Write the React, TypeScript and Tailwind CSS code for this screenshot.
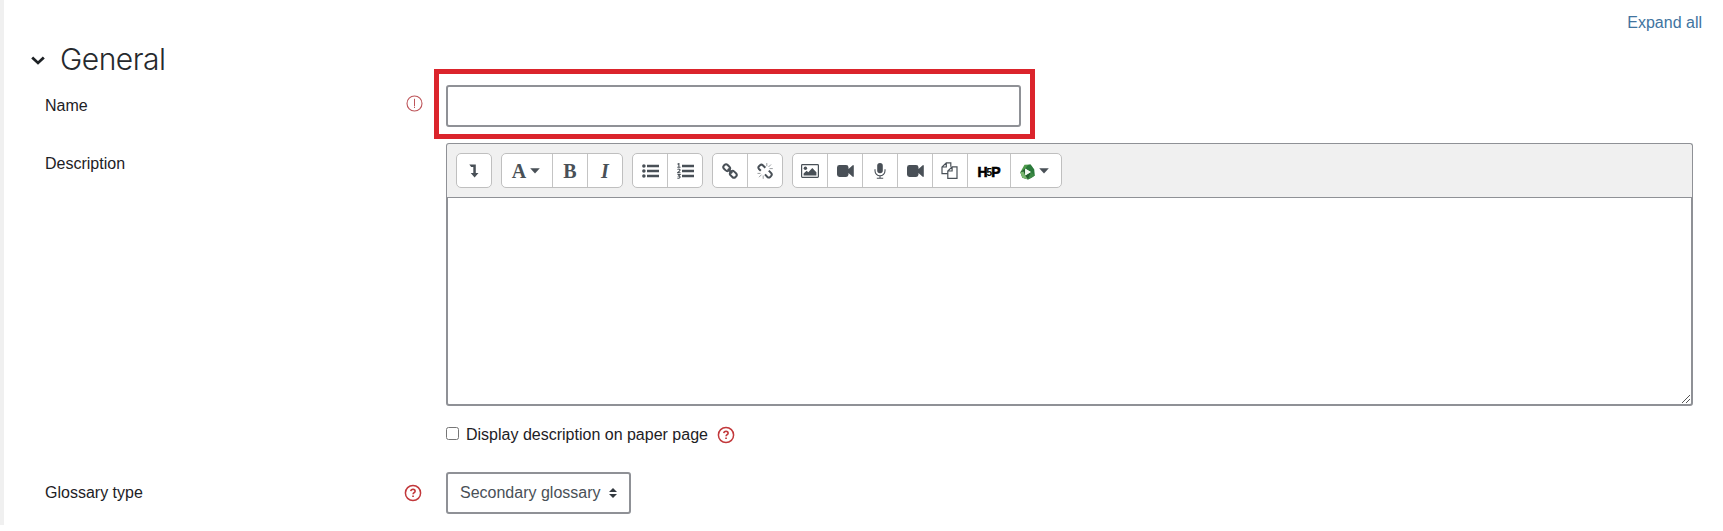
import type { ReactNode } from "react";

const ink = "#495057";

function ToolGroup({ children }: { children: ReactNode }) {
  return (
    <div className="flex h-[35px] divide-x divide-[#c4c4c4] overflow-hidden rounded-[5px] border border-[#bfbfbf] bg-white">
      {children}
    </div>
  );
}

function Tool({ label, wide = "w-[35px]", children }: { label: string; wide?: string; children: ReactNode }) {
  return (
    <button aria-label={label} className={`flex h-full shrink-0 items-center justify-center ${wide}`}>
      {children}
    </button>
  );
}

function Caret() {
  return (
    <svg width="10" height="6" viewBox="0 0 10 6" fill={ink}>
      <path d="M.2.200h9.600L5 5.600z" />
    </svg>
  );
}

function LevelDown() {
  return (
    <svg width="10" height="14" viewBox="0 0 10 14" fill={ink}>
      <path d="M.3.5H6.800V9h2.700L5.600 13.500 1.700 9h2.600V2.900H2.200z" />
    </svg>
  );
}

function BulletList() {
  return (
    <svg width="17" height="14" viewBox="0 0 17 14" fill={ink}>
      <circle cx="1.900" cy="2" r="1.800" />
      <circle cx="1.900" cy="7" r="1.800" />
      <circle cx="1.900" cy="12" r="1.800" />
      <path d="M5 .8h12v2.400H5zM5 5.800h12v2.400H5zM5 10.800h12v2.400H5z" />
    </svg>
  );
}

function NumberList() {
  return (
    <svg width="17" height="16" viewBox="0 0 17 16" fill={ink}>
      <path d="M5 1.800h12v2.400H5zM5 6.800h12v2.400H5zM5 11.800h12v2.400H5z" />
      <path
        d="M.5 1.300 1.900.6V4M.3 4.300h3.200M.5 6.500q1.400-.9 2.300 0T.6 9.700h2.900M.5 11.500h2.500L1.600 13q1.700 0 1.400 1.400-.9 1.300-2.600.5"
        fill="none"
        stroke={ink}
        strokeWidth="1.100"
      />
    </svg>
  );
}

function Chain() {
  return (
    <svg width="16" height="16" viewBox="0 0 16 16" fill="none" stroke={ink} strokeWidth="2">
      <rect x="1.200" y="2.100" width="7" height="5.200" rx="2.300" transform="rotate(45 4.700 4.700)" />
      <rect x="7.800" y="8.700" width="7" height="5.200" rx="2.300" transform="rotate(45 11.300 11.300)" />
      <path d="m5.800 5.800 4.400 4.400" />
    </svg>
  );
}

function BrokenChain() {
  return (
    <svg width="16" height="16" viewBox="0 0 16 16" fill="none" stroke={ink}>
      <path
        d="M3.800 7.800 2 6q-1.300-1.500 0-2.800l1-1q1.400-1.200 2.800 0l2.500 2.600M8 11.400l2.400 2.500q1.400 1.200 2.800 0l1-1q1.200-1.400 0-2.800l-2.400-2.500"
        strokeWidth="2"
      />
      <path d="M9.800 0v3.200M11.500 4 14 1.500M12.500 5.600h3.300M6.200 12.500v3.300M4.500 11.700 2 14.200M.5 10.400h3" strokeWidth=".8" opacity=".7" />
    </svg>
  );
}

function Picture() {
  return (
    <svg width="18" height="14" viewBox="0 0 18 14" fill={ink}>
      <rect x=".6" y=".6" width="16.800" height="12.800" rx=".8" fill="none" stroke={ink} strokeWidth="1.200" />
      <circle cx="4.400" cy="4.200" r="1.700" />
      <path d="M2.600 11.500V9.500l3-2.800 1.700 1.600 4-4.300 4.100 4.200v3.300z" />
    </svg>
  );
}

function Camera() {
  return (
    <svg width="17" height="12" viewBox="0 0 17 12" fill={ink}>
      <path d="M2.500 0h6.600q2.400 0 2.400 2.400v1.500L15.700.2q.9-.5 1.100.6v10.400q-.2 1.100-1.100.6L11.500 8.100v1.500Q11.500 12 9.100 12H2.500Q0 12 0 9.600V2.400Q0 0 2.500 0z" />
    </svg>
  );
}

function Microphone() {
  return (
    <svg width="12" height="16" viewBox="0 0 12 16" fill="none" stroke={ink}>
      <rect x="3.200" y="0" width="5.600" height="10.300" rx="2.800" fill={ink} stroke="none" />
      <path d="M1 6.300v1.500a5 5 0 0 0 10 0V6.300M6 12.800v2.400M2.800 15.200h6.400" strokeWidth="1.100" />
    </svg>
  );
}

function Files() {
  return (
    <svg width="17" height="17" viewBox="0 0 17 17" fill="none" stroke={ink} strokeWidth="1.200">
      <path d="M6.800 11.600H1V5l4.300-4.200h4.500v4M5.300.8V5H1" />
      <path d="M6.800 9v7.300H16V4.800h-4.900zM11.100 4.800V9H6.800" />
    </svg>
  );
}

function GreenLogo() {
  return (
    <svg width="15" height="16" viewBox="0 0 15 16">
      <path d="M4.500.8 10.500.6l2 2.600L9 6.500 5.200 4.600 3.500 8.500.3 8.300z" fill="#4f9a4b" />
      <path d="m10.500.6 3.700 4.600.6 6.300-3.300 2.200-.7-5.600-5.600-3.500L8 1z" fill="#2b7a3b" />
      <path d="M.3 8.300 5.200 4.600v6.800l5.600-3.300.7 5.600L8 15.500l-5.700-1.700z" fill="#24602f" />
      <path d="m.3 8.300 3.200-.8 1.700 3.900L8 15.500l-5.700-1.700z" fill="#79b870" />
      <path d="m14.800 11.500-3.300 2.200L8 15.500l2.800-7.400z" fill="#3c8a45" />
      <path d="m5.300 4.800 5.500 3.300-5.500 3.200z" fill="#f3fbf2" />
    </svg>
  );
}

function Help() {
  return (
    <svg width="18" height="18" viewBox="0 0 18 18" fill="none" stroke="#c2383b">
      <circle cx="9" cy="9" r="7.600" strokeWidth="1.500" />
      <path d="M6.800 7.200Q7 5.300 9 5.300q2.100.1 2.100 1.900 0 1-1.100 1.600-.9.500-.9 1.500" strokeWidth="1.600" />
      <path d="M8.200 11.500h1.700v1.600H8.200z" fill="#c2383b" stroke="none" />
    </svg>
  );
}

export default function App() {
  return (
    <div className="flex h-[531px] w-full items-start overflow-hidden bg-white font-['Liberation_Sans',Arial,sans-serif] text-[16px] leading-6 text-[#1d2125]">
      <div className="h-[525px] w-1 shrink-0 bg-[#f0f0f0]" />
      <main className="min-w-0 flex-1 pr-[30px]">
        <div className="-mr-[9px] flex h-[34px] justify-end pt-[11px]">
          <a className="text-[#41749f]">Expand all</a>
        </div>

        <div className="flex h-[35px] items-center gap-[15px] pl-[27px] pt-[15px]">
          <svg width="14" height="9" viewBox="0 0 14 9" fill="none" stroke="#1d2125" strokeWidth="2.800" className="mt-[3px]">
            <path d="m1.200 1.400 5.800 5.500 5.800-5.500" />
          </svg>
          <h2 className="font-['Inter',sans-serif] text-[30px] font-light leading-9 tracking-[-0.5px] text-[#26292d]">General</h2>
        </div>

        <div className="flex h-[70px] items-start">
          <label className="w-[361px] shrink-0 pl-[41px] pt-[25px]">Name</label>
          <div className="flex w-[69px] shrink-0 pl-[41px] pt-[26px]">
            <svg width="17" height="17" viewBox="0 0 17 17" fill="none" stroke="#bd5459">
              <circle cx="8.500" cy="8.500" r="7.500" strokeWidth="1.100" />
              <path d="M8.500 3.800v7.400M8.500 11.800v1.200" strokeWidth="1" />
            </svg>
          </div>
          <div className="h-[70px] w-[601px] border-[5px] border-[#db242c] px-[7px] pt-[11px]">
            <input aria-label="Name" className="h-[42px] w-[575px] rounded-[3px] border-2 border-[#8f9196] bg-white px-3 outline-none" />
          </div>
        </div>

        <div className="mt-1 flex items-start">
          <label className="w-[442px] shrink-0 pl-[41px] pt-[9px]">Description</label>
          <div className="min-w-0 flex-1">
            <div className="flex h-[54px] items-start gap-[9px] rounded-t-[3px] border border-b-0 border-[#8f9196] bg-[#f0f0f0] pl-[9px] pt-[9px]">
              <ToolGroup>
                <Tool label="Show more" wide="w-[34px]"><LevelDown /></Tool>
              </ToolGroup>
              <ToolGroup>
                <Tool label="Paragraph styles" wide="w-[51px]">
                  <span className="-ml-[2px] mr-[4px] font-['Liberation_Serif',serif] text-[20px] font-bold leading-5 text-[#495057]">A</span>
                  <Caret />
                </Tool>
                <Tool label="Bold">
                  <span className="font-['Liberation_Serif',serif] text-[20px] font-bold leading-5 text-[#495057]">B</span>
                </Tool>
                <Tool label="Italic" wide="w-[34px]">
                  <span className="font-['Liberation_Serif',serif] text-[20px] font-bold italic leading-5 text-[#495057]">I</span>
                </Tool>
              </ToolGroup>
              <ToolGroup>
                <Tool label="Unordered list"><BulletList /></Tool>
                <Tool label="Ordered list" wide="w-[34px]"><NumberList /></Tool>
              </ToolGroup>
              <ToolGroup>
                <Tool label="Link"><Chain /></Tool>
                <Tool label="Unlink" wide="w-[34px]"><BrokenChain /></Tool>
              </ToolGroup>
              <ToolGroup>
                <Tool label="Insert image"><Picture /></Tool>
                <Tool label="Insert media"><Camera /></Tool>
                <Tool label="Record audio"><Microphone /></Tool>
                <Tool label="Record video"><Camera /></Tool>
                <Tool label="Manage files"><span className="mb-px mr-px"><Files /></span></Tool>
                <Tool label="Insert interactive content" wide="w-[43px]">
                  <span className="mt-[2px] flex items-center font-['Liberation_Sans',sans-serif] text-[14px] font-bold leading-4 text-black [-webkit-text-stroke:0.6px_black]">
                    <span>H</span>
                    <span className="-mx-px mt-[2px] text-[10px] font-bold [-webkit-text-stroke:0px]">5</span>
                    <span>P</span>
                  </span>
                </Tool>
                <Tool label="Media gallery" wide="w-[50px]">
                  <span className="-ml-[3px] mr-[4px] mt-[2px]"><GreenLogo /></span>
                  <Caret />
                </Tool>
              </ToolGroup>
            </div>
            <div className="flex h-[209px] items-end justify-end rounded-b-[3px] border-2 border-t border-[#8f9196] bg-white">
              <svg width="10" height="10" viewBox="0 0 10 10" stroke="#555" strokeWidth="1">
                <path d="m1 9 8-8M5 9l4-4" />
              </svg>
            </div>
            <div className="mt-[17px] flex h-6 items-center">
              <input type="checkbox" aria-label="Display description on paper page" className="mb-[3px] h-[13px] w-[13px] appearance-none rounded-[2.500px] border border-[#767676]" />
              <span className="ml-[7px]">Display description on paper page</span>
              <span className="ml-[9px]"><Help /></span>
            </div>
          </div>
        </div>

        <div className="mt-[25px] flex h-[42px] items-center">
          <label className="w-[400px] shrink-0 pl-[41px]">Glossary type</label>
          <div className="w-[42px] shrink-0"><Help /></div>
          <button className="flex h-[42px] w-[185px] items-center justify-between rounded-[3px] border-2 border-[#8f9196] pl-3 pr-3 text-[#495057]">
            <span>Secondary glossary</span>
            <svg width="8" height="10" viewBox="0 0 8 10" fill="#343a40">
              <path d="M4 0 8 4H0zM4 10 0 6h8z" />
            </svg>
          </button>
        </div>
      </main>
    </div>
  );
}
